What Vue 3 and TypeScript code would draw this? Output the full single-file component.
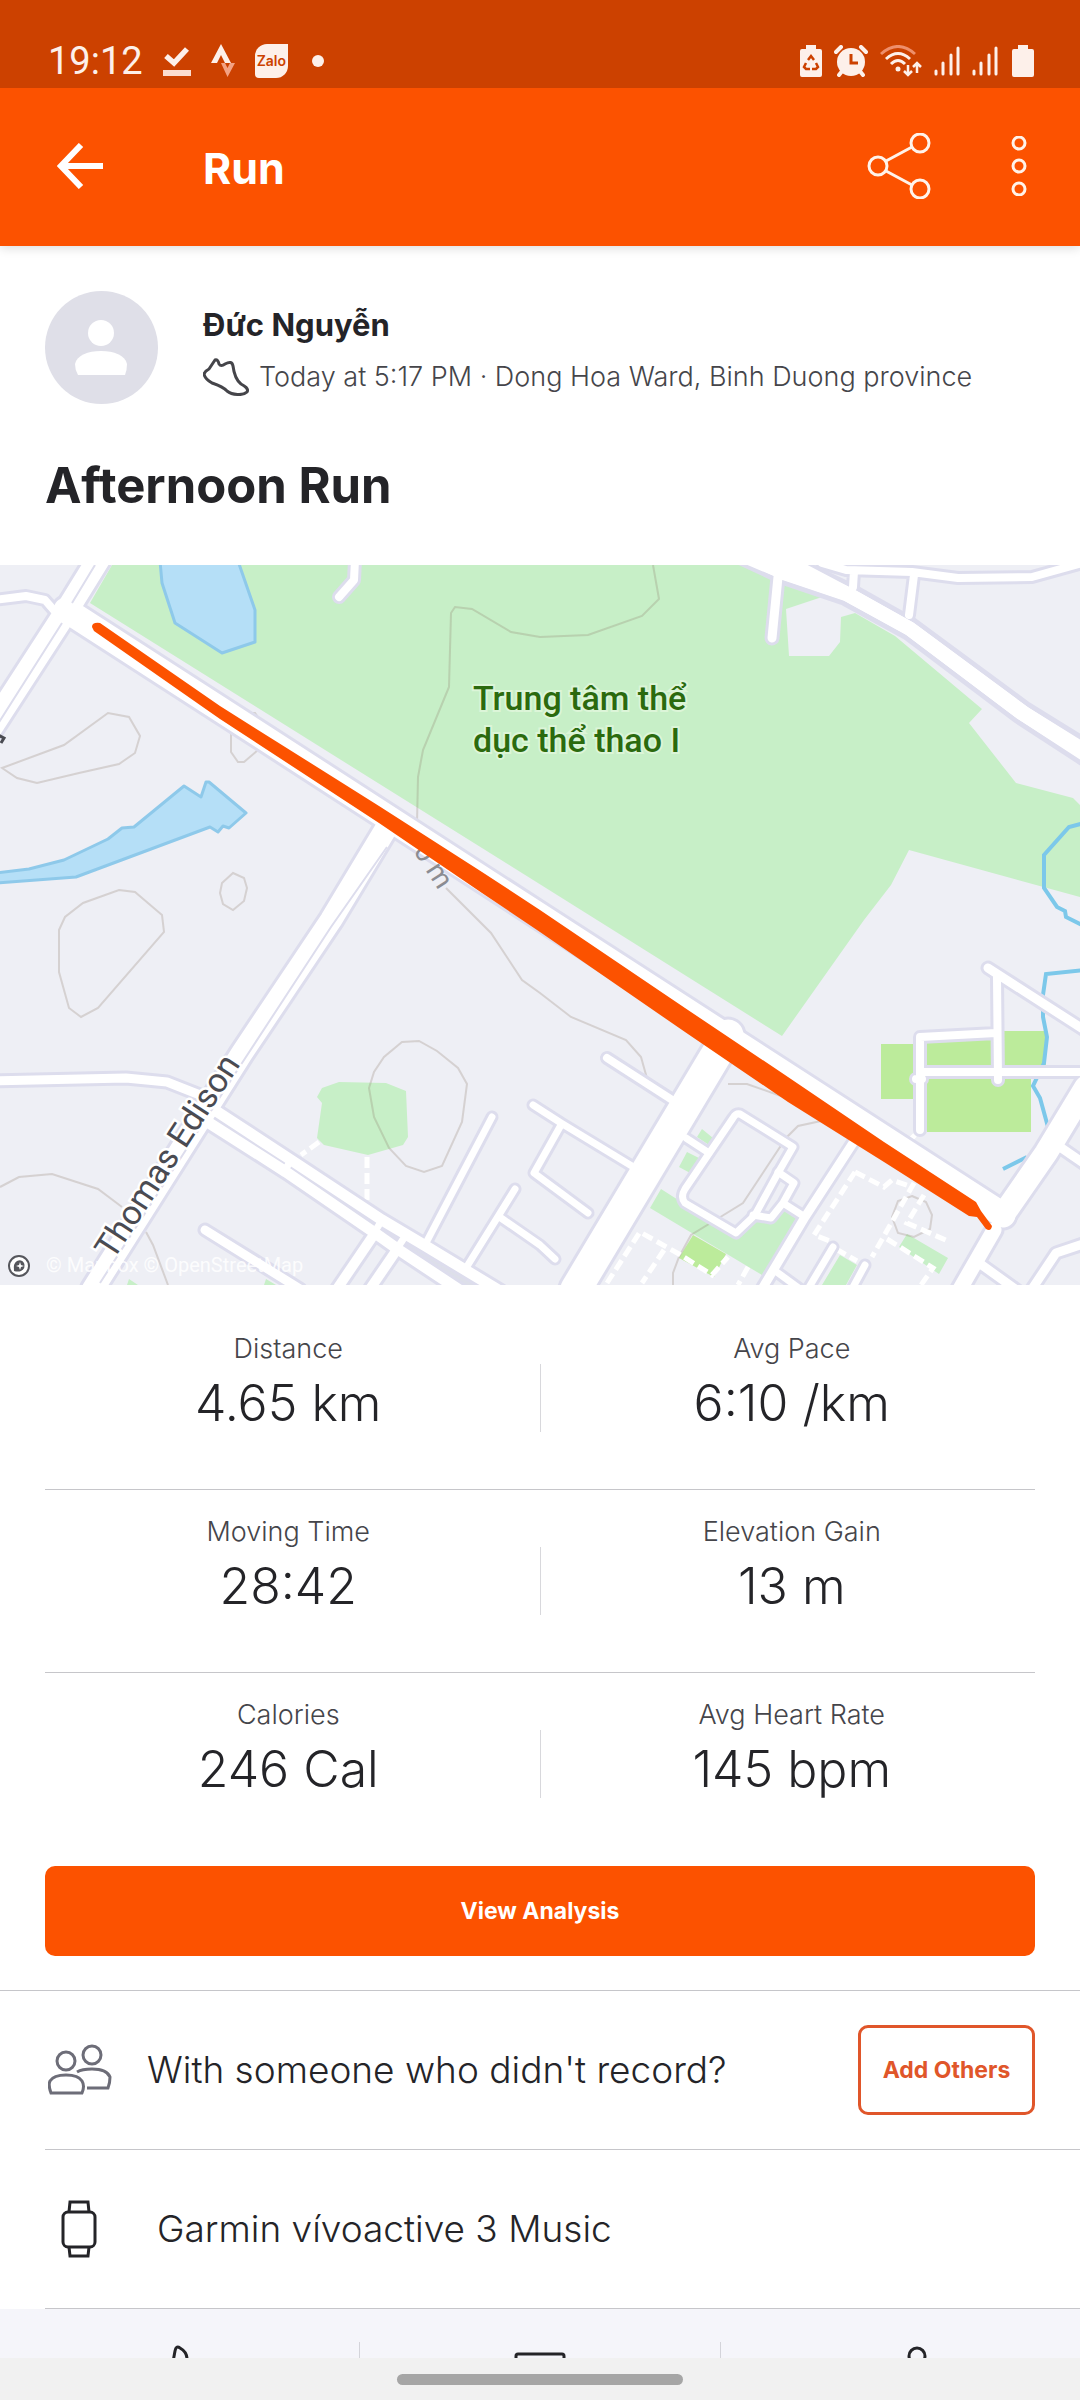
<script setup lang="ts">
interface Stat {
  label: string
  value: string
}

const statRows: Stat[][] = [
  [
    { label: 'Distance', value: '4.65 km' },
    { label: 'Avg Pace', value: '6:10 /km' },
  ],
  [
    { label: 'Moving Time', value: '28:42' },
    { label: 'Elevation Gain', value: '13 m' },
  ],
  [
    { label: 'Calories', value: '246 Cal' },
    { label: 'Avg Heart Rate', value: '145 bpm' },
  ],
]

interface Road {
  d: string
  w: number
}

const roads: Road[] = [
  { d: 'M-6 35 26 31 45 35 58 50', w: 8 },
  { d: 'M355-5 354 15 339 32', w: 8 },
  { d: 'M-6 516 126 513 167 517 200 530 217 546', w: 9 },
  { d: 'M213 544 291 595 382 655 424 680 500 726', w: 11 },
  { d: 'M206 556 286 607 375 668 399 685 461 726', w: 11 },
  { d: 'M291 595 284 607M382 655 374 668M406 670 396 685', w: 7 },
  { d: 'M375 668 337 724M398 683 370 724', w: 10 },
  { d: 'M205 665 300 724', w: 9 },
  { d: 'M492 552 427 676', w: 7 },
  { d: 'M515 624 466 703M501 653 540 680 555 694', w: 7 },
  { d: 'M533 540 561 558 640 606M561 560 534 608 588 648', w: 7 },
  { d: 'M607 493 680 540', w: 8 },
  { d: 'M740 549 793 582 778 608 755 650 736 668 685 638Q680 632 685 624L733 553Q736 548 740 549Z', w: 7 },
  { d: 'M778 607 794 618 783 638 771 653 753 650M783 638 805 652', w: 7 },
  { d: 'M686 573 709 588', w: 7 },
  { d: 'M853 578 805 652 762 724', w: 9 },
  { d: 'M774 705 800 724M833 682 808 724M865 700 852 724', w: 7 },
  { d: 'M988 403 1086 466', w: 9 },
  { d: 'M997 412 998 515M920 565 920 472 996 468M922 507 1086 507M916 514H922', w: 8 },
  { d: 'M1060 582 1086 600M979 698 1018 726M1086 678 1056 688 1032 724', w: 9 },
  { d: 'M822-2 846 5 912 7 958 13 1032 12 1086-3M853 22 854 6M909 50 914 10', w: 8 },
  { d: 'M778 12 772 73', w: 9 },
  { d: 'M994 665 960 724', w: 15 },
  { d: 'M1086 522 1046 588 1003 650', w: 23 },
  { d: 'M728 470 576 724', w: 31 },
  { d: 'M725 472 740 482', w: 16 },
  { d: 'M98-5 64 50-15 172', w: 23 },
  { d: 'M387 262 331 355 242 488 93 724', w: 22 },
  { d: 'M66 45 260 170 540 351 1003 650', w: 25 },
]

const contours: string[] = [
  'M2 203 64 180 108 148 129 152 140 171 135 188 119 199 79 208 37 218 17 213Z',
  'M231 165V187L238 197H244L258 185M246 148H255L262 158',
  'M233 308 244 313 247 323 244 336 233 345 223 339 220 328 222 318Z',
  'M119 325 135 327 162 350 164 367 98 443 81 452 69 443 59 407V365L65 352 83 338Z',
  'M653 0 659 34 642 51 588 70 540 72 511 67 472 44 455 42 451 48 449 122 423 185 418 212 417 258',
  'M446 323 491 368 522 415 540 428 571 452 626 475 641 492 648 517M728 519H747L781 531M821 556 798 561 786 573 743 638 722 651 691 670 679 692 673 708V720',
  'M402 477 419 476 437 486 458 503 467 519 462 557 442 601 424 607 406 601 389 583 374 552 369 523 374 507 384 492Z',
  'M0 622 19 612 52 609 98 624 122 642M146 667 153 680 168 720',
  'M912 631 926 637 932 650 930 664 914 672 898 668 892 652 898 636Z',
]

const paths: string[] = [
  'M367 592V635M319 577 301 590',
  'M855 607 814 670 830 676M855 607 884 622 892 615 912 622',
  'M914 618 872 692M924 630 907 658 950 677',
  'M607 718 640 667 679 689 712 710 728 692M664 685 642 718',
  'M887 674 900 682 933 703 921 720M915 570 907 578M836 684 857 696M748 702 738 720',
]
</script>

<template>
  <div class="screen">
    <header class="top">
      <div class="status">
        <div class="status-left">
          <span class="clock">19:12</span>
          <svg width="28" height="32" viewBox="0 0 28 32" aria-hidden="true">
            <path d="M3 11 11 18 24 4" fill="none" stroke="#fdf0ea" stroke-width="5.500" />
            <path d="M0 25H28V31H0Z" fill="#fbdccf" />
          </svg>
          <svg width="24" height="34" viewBox="0 0 24 34" aria-hidden="true">
            <path d="M10 0 20 19H14L10 11 6 19H0Z" fill="#fdf0ea" />
            <path d="M10 19H14L16.500 24 19 19H24L16.500 33Z" fill="#f3a283" />
          </svg>
          <span class="zalo">Zalo</span>
          <span class="dot"></span>
        </div>
        <div class="status-right">
          <svg width="22" height="32" viewBox="0 0 22 32" aria-hidden="true">
            <path d="M6 0H16V4H20Q22 4 22 6V30Q22 32 20 32H2Q0 32 0 30V6Q0 4 2 4H6Z" fill="#fdf0ea" />
            <path d="M8 15 11 11 14 15M16 18 18 22 16 24H12M10 24H6L4 22 6 18" fill="none" stroke="#cc4100" stroke-width="2.500" />
          </svg>
          <svg width="34" height="32" viewBox="0 0 34 32" aria-hidden="true">
            <path d="M2 7 7 2M32 7 27 2M5 30 9 25M29 30 25 25" stroke="#fdf0ea" stroke-width="4" stroke-linecap="round" />
            <circle cx="17" cy="17" r="14" fill="#fdf0ea" />
            <path d="M17 9V18H24" fill="none" stroke="#cc4100" stroke-width="3" />
          </svg>
          <svg width="42" height="32" viewBox="0 0 42 32" fill="none" stroke="#fdf0ea" stroke-width="3" aria-hidden="true">
            <path d="M1 9Q18-6 35 9" stroke="#ee8f6c" />
            <path d="M6 14Q18 3 30 14M11 19Q18 12 25 19" />
            <circle cx="18" cy="24" r="2.500" fill="#fdf0ea" stroke="none" />
            <path d="M28 20V30M24 26 28 30 32 26M37 28V18M33 22 37 18 41 22" stroke-width="2.500" />
          </svg>
          <svg v-for="n in 2" :key="n" width="26" height="32" viewBox="0 0 26 32" stroke="#fdf0ea" stroke-width="3" stroke-linecap="round" aria-hidden="true">
            <path d="M2 26V29M9 18V29M17 10V29M24 3V29" />
          </svg>
          <svg class="battery" width="22" height="32" viewBox="0 0 22 32" aria-hidden="true">
            <path d="M6 0H16V4H20Q22 4 22 6V30Q22 32 20 32H2Q0 32 0 30V6Q0 4 2 4H6Z" fill="#fdf0ea" />
          </svg>
        </div>
      </div>
      <div class="bar">
        <button class="icon-btn back" aria-label="Back">
          <svg width="46" height="46" viewBox="0 0 46 46" fill="none" stroke="#fff" stroke-width="6">
            <path d="M24 2 4 23 24 44M4 23H46" />
          </svg>
        </button>
        <h1 class="bar-title">Run</h1>
        <button class="icon-btn" aria-label="Share">
          <svg width="64" height="66" viewBox="0 0 64 66" fill="none" stroke="#fff3ea" stroke-width="3">
            <circle cx="11" cy="33" r="9" />
            <circle cx="53" cy="10" r="9" />
            <circle cx="53" cy="56" r="9" />
            <path d="M19 28 45 14M19 38 45 52" />
          </svg>
        </button>
        <button class="icon-btn more" aria-label="More options">
          <svg width="16" height="60" viewBox="0 0 16 60" fill="none" stroke="#fff3ea" stroke-width="3">
            <circle cx="8" cy="7" r="6" />
            <circle cx="8" cy="30" r="6" />
            <circle cx="8" cy="53" r="6" />
          </svg>
        </button>
      </div>
    </header>

    <section class="athlete">
      <svg class="avatar" width="113" height="113" viewBox="0 0 113 113" aria-hidden="true">
        <circle cx="56.500" cy="56.500" r="56.500" fill="#dfdfe8" />
        <circle cx="56" cy="42" r="13" fill="#fff" />
        <path d="M30 73C32 64 43 60 56 60S80 64 82 73Q82 79 80 84H33Q30 79 30 73Z" fill="#fff" />
      </svg>
      <div class="who">
        <a class="name" href="#">Đức Nguyễn</a>
        <p class="meta">
          <svg width="46" height="38" viewBox="0 0 46 38" fill="none" stroke="#45454a" stroke-width="3" stroke-linejoin="round" aria-hidden="true">
            <path d="M12 2Q15 1 16 6Q18 9 22 6Q29 2 30 8C31 16 33 22 38 26C42 28 46 31 44 34C40 38 29 37 24 33C19 28 15 27 9 25Q2 21 1 16Q2 13 6 11Z" />
          </svg>
          <span>Today at 5:17 PM · Dong Hoa Ward, Binh Duong province</span>
        </p>
      </div>
    </section>

    <h2 class="title">Afternoon Run</h2>

    <svg class="map" viewBox="0 0 1080 720" role="img" aria-label="Route map">
      <rect width="1080" height="720" fill="#eeeff5" />
      <g fill="#c7efc7">
        <path d="M112 0 90 38 597 355 782 471 864 355 891 320 909 285 1080 332V240L1073 233 1016 218 969 158 982 144 895 71 855 48 841 52 840 77 829 91H789L786 44 822 32 740 0Z" />
        <path d="M339 517 386 518 406 526 408 572 403 580 368 590 324 580 317 573 322 538 317 532 322 523Z" />
        <path d="M697 572 702 564 713 573 709 580ZM687 587 699 593 692 609 679 602ZM661 624 683 638 736 670 753 653 771 657 784 645 800 653 762 710 650 643Z" />
        <path d="M907 669 948 693 939 709 899 682ZM840 690 857 700 846 720H822ZM129 714 138 720H127ZM266 714 276 720H264Z" />
      </g>
      <g fill="#bceb9b">
        <path d="M881 479H915V534H881ZM927 476 991 474V500H927ZM1003 466H1046V500H1003ZM927 512H1031V567H927Z" />
        <path d="M693 670 726 689 714 712 679 693Z" />
      </g>
      <g fill="#b5dff7" stroke="#8ec9ea" stroke-width="3" stroke-linejoin="round">
        <path d="M160-4 162 18 175 58 222 88 255 77V45L238-4Z" />
        <path d="M-4 308 29 304 64 295 108 274 122 263 134 262 184 221 201 232 206 217H209L246 248 229 263 223 261 218 267 210 262 76 312-4 318Z" />
      </g>
      <g fill="none" stroke="#7cc8ea" stroke-width="4">
        <path d="M1084 258 1069 262 1044 290V323L1057 342 1065 346 1066 352 1084 361" />
        <path d="M1084 405 1046 409 1043 430V452L1047 472 1044 498 1033 521 1040 533 1048 562M1027 592 1003 604" />
      </g>
      <path v-for="c in contours" :key="c" :d="c" fill="none" stroke="#8c7866" stroke-opacity=".25" stroke-width="2" />
      <path v-for="p in paths" :key="p" :d="p" fill="none" stroke="#fff" stroke-width="5" stroke-dasharray="11 5" />

      <path d="M213 551 289 601 378 661 402 677 480 726" fill="none" stroke="#dddfe9" stroke-width="22" />
      <g fill="none" stroke="#dddded" stroke-linecap="round" stroke-linejoin="round">
        <path v-for="r in roads" :key="r.d" :d="r.d" :stroke-width="r.w + 6" />
      </g>
      <path d="M736-4 781 17 843 38 905 72 1015 155 1084 200V174L1029 140 914 55 855 22 800-4Z" fill="#fff" stroke="#dddded" stroke-width="5" />
      <g fill="none" stroke="#fff" stroke-linecap="round" stroke-linejoin="round">
        <path v-for="r in roads" :key="r.d" :d="r.d" :stroke-width="r.w" />
      </g>
      <path d="M738-4 781 14 843 35 905 69 1015 152 1084 196V178L1029 143 914 58 855 25 800-4Z" fill="#fff" />
      <path d="M95 0 72 38M62 58-6 165M387 282 331 362 242 498 100 718" fill="none" stroke="#dddded" stroke-width="2" />

      <text class="elev" x="413" y="286" transform="rotate(57 413 286)">0 m</text>
      <path d="M92 62Q92 57 100 58L220 141 379 241 482 307 540 345 685 443 788 512 884 577 976 637 981 646 992 661Q991 667 986 664L977 652 969 651 884 597 788 537 685 467 540 367 482 328 379 258 220 154 94 66Z" fill="#fc5200" />

      <g class="park">
        <text x="473" y="145">Trung tâm thể</text>
        <text x="473" y="187">dục thể thao I</text>
      </g>
      <text class="street" x="113" y="696" transform="rotate(-57 113 696)">Thomas Edison</text>
      <path d="M-2 170 4 173 1 178" fill="none" stroke="#4a4b52" stroke-width="3" />

      <circle cx="19" cy="701" r="10" fill="#fff" stroke="#55565c" stroke-width="2" />
      <path d="M14 706Q13 698 17 696Q22 694 24 698Q26 703 21 706Q18 707 14 706Z" fill="#55565c" />
      <path d="M20 697 21 700 24 701 21 702 20 705 19 702 16 701 19 700Z" fill="#fff" />
      <text class="credit" x="46" y="707">© Mapbox © OpenStreetMap</text>
    </svg>

    <section class="stats">
      <div v-for="(row, i) in statRows" :key="i" class="stat-row">
        <div class="stat">
          <span class="label">{{ row[0].label }}</span>
          <span class="value">{{ row[0].value }}</span>
        </div>
        <span class="rule"></span>
        <div class="stat">
          <span class="label">{{ row[1].label }}</span>
          <span class="value">{{ row[1].value }}</span>
        </div>
      </div>
    </section>

    <div class="cta">
      <button class="primary">View Analysis</button>
    </div>

    <section class="row people">
      <svg width="64" height="52" viewBox="0 0 64 52" fill="none" stroke="#6d6d78" stroke-width="3" aria-hidden="true">
        <circle cx="18" cy="17" r="9" />
        <circle cx="44" cy="11" r="9" />
        <path d="M3 49Q0 41 2 37C5 32 12 31 18 31S31 32 34 37Q37 42 34 49Z" />
        <path d="M29 28C34 25 39 25 44 25C53 25 60 28 62 33Q62 39 60 44H39" />
      </svg>
      <p class="row-text">With someone who didn't record?</p>
      <button class="outline">Add Others</button>
    </section>

    <section class="row device">
      <svg width="36" height="58" viewBox="0 0 36 58" fill="none" stroke="#242428" stroke-width="3" aria-hidden="true">
        <rect x="2" y="12" width="32" height="35" rx="5" />
        <path d="M8 12 9 2H27L28 12M8 47 9 56H27L28 47" />
      </svg>
      <p class="row-text">Garmin vívoactive 3 Music</p>
    </section>

    <nav class="actions">
      <button class="action" aria-label="Give kudos">
        <svg width="54" height="54" viewBox="0 0 54 54" fill="none" stroke="#242428" stroke-width="3">
          <path d="M20 20 22 9Q23 3 27 6Q34 10 34 17V22H46V50H10V24H18Z" />
        </svg>
      </button>
      <button class="action" aria-label="Comment">
        <svg width="54" height="54" viewBox="0 0 54 54" fill="none" stroke="#242428" stroke-width="3">
          <path d="M5 12H49Q51 12 51 14V42H30L20 52V42H3V14Q3 12 5 12Z" />
        </svg>
      </button>
      <button class="action" aria-label="Share activity">
        <svg width="54" height="54" viewBox="0 0 54 54" fill="none" stroke="#242428" stroke-width="3">
          <circle cx="44" cy="14" r="8" />
          <circle cx="10" cy="30" r="8" />
          <circle cx="44" cy="46" r="6" />
        </svg>
      </button>
    </nav>

    <footer class="gesture"><span class="pill"></span></footer>
  </div>
</template>

<style>
body {
  background: #fff;
}
</style>

<style scoped>
.screen {
  display: flex;
  flex-direction: column;
  min-height: 100vh;
  background: #fff;
  color: #242428;
  font-family: Inter, "Liberation Sans", sans-serif;
}
button {
  font-family: inherit;
  margin: 0;
  padding: 0;
  border: 0;
  background: none;
}
h1, h2, p {
  margin: 0;
}
svg {
  display: block;
  flex: none;
}
.top {
  box-shadow: 0 2px 10px rgba(0, 0, 0, .14);
}
.status {
  display: flex;
  justify-content: space-between;
  align-items: center;
  height: 88px;
  padding: 34px 46px 0 48px;
  box-sizing: border-box;
  background: #cc4100;
}
.status-left,
.status-right {
  display: flex;
  align-items: center;
}
.status-left {
  gap: 20px;
}
.status-right {
  gap: 12px;
}
.battery {
  margin-left: 2px;
}
.clock {
  font-family: Roboto, sans-serif;
  font-size: 38px;
  line-height: 48px;
  color: #fdf0ea;
}
.zalo {
  padding: 0 2px;
  border-radius: 12px 0 12px 4px;
  background: #fdf0ea;
  color: #cc4100;
  font-size: 14px;
  font-weight: 600;
  line-height: 34px;
}
.dot {
  width: 12px;
  height: 12px;
  margin-left: 4px;
  border-radius: 50%;
  background: #fdf0ea;
}
.bar {
  display: flex;
  align-items: center;
  height: 158px;
  padding: 0 53px 2px 57px;
  box-sizing: border-box;
  background: #fc5200;
}
.back {
  width: 146px;
}
.bar-title {
  flex: 1;
  padding-top: 4px;
  color: #fff;
  font-size: 43px;
  font-weight: 700;
  line-height: 56px;
}
.more {
  margin-left: 80px;
}
.athlete {
  display: flex;
  gap: 45px;
  padding: 45px 45px 0;
}
.who {
  padding-top: 12px;
}
.name {
  display: block;
  color: #242428;
  font-size: 31px;
  font-weight: 700;
  line-height: 44px;
  text-decoration: none;
}
.meta {
  display: flex;
  align-items: center;
  gap: 10px;
  margin-top: 6px;
  color: #45454a;
  font-size: 27px;
  line-height: 48px;
  font-weight: 350;
}
.title {
  padding: 50px 45px 47px;
  font-size: 49px;
  font-weight: 700;
  line-height: 64px;
}
.map {
  width: 100%;
  height: auto;
}
.map text {
  font-family: Roboto, "Noto Sans", sans-serif;
}
.map .park text {
  font-size: 34px;
  font-weight: 500;
  fill: #2b6a0e;
  stroke: #dcf5d8;
  stroke-width: 4px;
  paint-order: stroke;
}
.map .street {
  font-size: 34px;
  fill: #4a4b52;
  stroke: #fff;
  stroke-width: 5px;
  paint-order: stroke;
}
.map .elev {
  font-size: 28px;
  fill: #8b8c92;
}
.map .credit {
  font-size: 20px;
  fill: #fff;
  fill-opacity: .85;
}
.stats {
  padding: 22px 45px 0;
}
.stat-row {
  display: flex;
  gap: 8px;
  height: 182px;
  border-bottom: 1px solid #c6c6ca;
}
.stat-row:last-child {
  border-bottom: 0;
}
.stat {
  flex: 1;
  display: flex;
  flex-direction: column;
  align-items: center;
  padding-top: 24px;
}
.label {
  color: #45454a;
  font-size: 27px;
  font-weight: 350;
  line-height: 36px;
}
.value {
  font-size: 50px;
  font-weight: 300;
  line-height: 64px;
  margin-top: 4px;
}
.rule {
  width: 1px;
  height: 68px;
  margin-top: 57px;
  background: #d8d8dc;
}
.cta {
  padding: 11px 45px 34px;
  border-bottom: 1px solid #c6c6ca;
}
.primary {
  display: block;
  width: 100%;
  height: 90px;
  border-radius: 10px;
  background: #fc5200;
  color: #fff;
  font-size: 23px;
  font-weight: 700;
}
.row {
  display: flex;
  align-items: center;
  height: 158px;
  margin-left: 45px;
  padding-right: 45px;
  border-bottom: 1px solid #c6c6ca;
}
.row-text {
  flex: 1;
  font-size: 37px;
  font-weight: 300;
  line-height: 52px;
}
.people {
  gap: 35px;
  padding-left: 3px;
}
.device {
  gap: 60px;
  padding-left: 16px;
}
.outline {
  width: 177px;
  height: 90px;
  border: 3px solid #e0562a;
  border-radius: 10px;
  color: #e0562a;
  font-size: 23px;
  font-weight: 700;
}
.actions {
  display: flex;
  flex: 1;
  align-items: flex-start;
  height: 49px;
  max-height: 49px;
  overflow: hidden;
  background: #f5f5fa;
}
.action {
  flex: 1;
  display: flex;
  justify-content: center;
  height: 120px;
  margin-top: 33px;
  border-right: 1px solid #d4d4da;
}
.action:last-child {
  border-right: 0;
}
.gesture {
  display: flex;
  justify-content: center;
  align-items: center;
  height: 42px;
  background: #f1f1f1;
}
.pill {
  width: 286px;
  height: 11px;
  border-radius: 6px;
  background: #a6a6a6;
}
</style>
